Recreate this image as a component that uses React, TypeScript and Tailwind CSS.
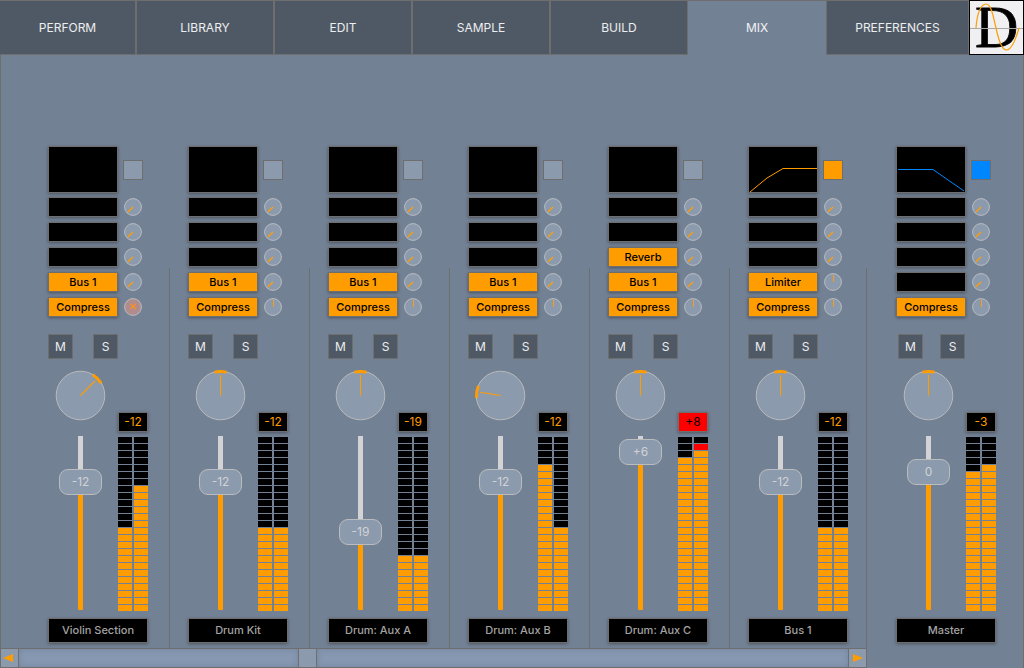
import React from "react";

type Insert = { name?: string; knob?: "low" | "mid" | "off" };

type Channel = {
  name: string;
  filter?: "highpass" | "lowpass";
  inserts: Insert[];
  pan: number;
  peak: string;
  clip?: boolean;
  gain: string;
  faderTop: number;
  meters: [number, number];
};

const SEGMENTS = 25;

const aux = (name: string, rest: Partial<Channel>): Channel => ({
  name,
  inserts: [{}, {}, {}, { name: "Bus 1" }, { name: "Compress", knob: "mid" }],
  pan: 0,
  peak: "-12",
  gain: "-12",
  faderTop: 33,
  meters: [12, 12],
  ...rest,
});

const channels: Channel[] = [
  aux("Violin Section", {
    inserts: [{}, {}, {}, { name: "Bus 1" }, { name: "Compress", knob: "off" }],
    pan: 45,
    meters: [12, 18],
  }),
  aux("Drum Kit", {}),
  aux("Drum: Aux A", { peak: "-19", gain: "-19", faderTop: 83, meters: [8, 8] }),
  aux("Drum: Aux B", { pan: -81, meters: [21, 12] }),
  aux("Drum: Aux C", {
    inserts: [{}, {}, { name: "Reverb" }, { name: "Bus 1" }, { name: "Compress", knob: "mid" }],
    peak: "+8",
    clip: true,
    gain: "+6",
    faderTop: 3,
    meters: [22, 24],
  }),
  aux("Bus 1", {
    filter: "highpass",
    inserts: [{}, {}, {}, { name: "Limiter", knob: "mid" }, { name: "Compress", knob: "mid" }],
  }),
];

const master = aux("Master", {
  filter: "lowpass",
  inserts: [{}, {}, {}, {}, { name: "Compress", knob: "mid" }],
  peak: "-3",
  gain: "0",
  faderTop: 23,
  meters: [20, 21],
});

function Logo() {
  return (
    <svg viewBox="0 0 55 55" className="h-[55px] w-[55px] shrink-0 overflow-visible" role="img" aria-label="D">
      <rect x="0.5" y="0.5" width="54" height="54" fill="#f0f0f2" stroke="#000" />
      <text x="6" y="47" fontSize="60" fontFamily="Liberation Serif, serif" fill="#000" stroke="#000" strokeWidth="0.8">
        D
      </text>
      <path d="M1 28.500H54" stroke="#a8a8a8" strokeWidth="1" />
      <path
        d="M7 28C8 13 12 4 17 4C22 4 24 15 27 28C30 42 33 50 37.500 50C42 50 46 42 50 28"
        fill="none"
        stroke="#ff9d00"
        strokeWidth="1.200"
      />
    </svg>
  );
}

function Header() {
  const tab = "border-y border-[#6e6e6e] text-center text-xs text-white/90";
  const idle = "border-r bg-[#4f5965]";
  return (
    <header className="flex h-[55px] w-full">
      <nav className="grid min-w-0 flex-1 grid-cols-[136fr_138fr_138fr_138fr_138fr_138fr_143fr]">
        <button className={`${tab} ${idle}`}>PERFORM</button>
        <button className={`${tab} ${idle} border-l`}>LIBRARY</button>
        <button className={`${tab} ${idle} border-l`}>EDIT</button>
        <button className={`${tab} ${idle} border-l`}>SAMPLE</button>
        <button className={`${tab} ${idle} border-l`}>BUILD</button>
        <button aria-current="page" className={`${tab} border-b-[#738194] bg-[#738194]`}>
          MIX
        </button>
        <button className={`${tab} ${idle} border-l`}>PREFERENCES</button>
      </nav>
      <Logo />
    </header>
  );
}

function FilterDisplay({ type }: { type?: Channel["filter"] }) {
  return (
    <svg viewBox="0 0 70 47" className="h-[47px] w-[70px] shadow-[0_1px_3px_rgba(0,0,0,0.35)]" aria-hidden="true">
      <rect x="0.5" y="0.5" width="69" height="46" fill="#000" stroke="#6e6e6e" />
      {type === "highpass" && (
        <path d="M2 46L19 32L35 22.500H69" fill="none" stroke="#ff9d00" strokeWidth="1" />
      )}
      {type === "lowpass" && (
        <path d="M2 23.500H37L68 45" fill="none" stroke="#0087ff" strokeWidth="1" />
      )}
    </svg>
  );
}

function SendKnob({ state, label }: { state: "low" | "mid" | "off"; label: string }) {
  return (
    <label className="ml-1.5 block h-[18px] w-[18px]">
      <input type="range" aria-label={label} className="sr-only" />
      <svg viewBox="0 0 18 18" className="h-[18px] w-[18px]" aria-hidden="true">
        <circle cx="9" cy="9" r="8.400" fill={state === "off" ? "#b08c8c" : "#8c9aae"} stroke="#b9bcc0" />
        {state === "low" && <path d="M9 9L3.800 14" stroke="#ff9d00" strokeWidth="1.300" />}
        {state === "mid" && <path d="M9.500 9V2" stroke="#f09d20" strokeWidth="1.100" />}
        {state === "off" && <path d="M6.500 6L11.800 11M11.800 6L6.500 11" stroke="#ff9020" strokeWidth="1.300" />}
      </svg>
    </label>
  );
}

function PanKnob({ angle, label }: { angle: number; label: string }) {
  return (
    <label className="ml-1.5 mt-2.5 block h-[53px] w-[53px]">
      <input type="range" min={-135} max={135} defaultValue={angle} aria-label={label} className="sr-only" />
      <svg viewBox="0 0 53 53" className="h-[53px] w-[53px]" aria-hidden="true">
        <circle cx="26.5" cy="26.5" r="24.300" fill="#8c9aae" stroke="#b9b9bb" />
        <g transform={`rotate(${angle} 26.5 26.5)`} fill="none" stroke="#ff9d00">
          <path d="M26.500 26.500V6" strokeWidth="1.100" />
          <path d="M20.500 3.200A24.100 24.100 0 0 1 32.500 3.200" strokeWidth="3" />
        </g>
      </svg>
    </label>
  );
}

function Fader({ top, gain, label }: { top: number; gain: string; label: string }) {
  return (
    <div className="relative ml-[11px] mt-3.5 flex h-[174px] w-[43px] justify-center">
      <div className="w-[5px] rounded-[1px] bg-[#ff9d00]">
        <div className="bg-[#d3d3d5]" style={{ height: top }} />
      </div>
      <div
        className="absolute inset-x-0 flex h-[26px] items-center justify-center rounded-[9px] border border-[#bbbcbe] bg-[#8c9aae] text-xs text-[#d0d2d5]"
        style={{ top }}
      >
        {gain}
      </div>
      <input
        type="range"
        min={-60}
        max={6}
        defaultValue={Number(gain)}
        aria-label={label}
        className="absolute inset-0 h-full w-full opacity-0 [writing-mode:vertical-lr]"
      />
    </div>
  );
}

function Meter({ level }: { level: number }) {
  return (
    <div className="flex w-3.5 flex-col gap-px">
      {Array.from({ length: SEGMENTS }, (_, i) => {
        const lit = i >= SEGMENTS - level;
        const color = !lit ? "bg-black" : i < 2 ? "bg-[#ff0000]" : "bg-[#ff9d00]";
        return <div key={i} className={`h-1.5 ${color}`} />;
      })}
    </div>
  );
}

function Strip({ channel, isMaster }: { channel: Channel; isMaster?: boolean }) {
  const c = channel;
  const toggle =
    c.filter === "highpass" ? "bg-[#ff9d00]" : c.filter === "lowpass" ? "bg-[#0087ff]" : "bg-[#8c9aae]";
  const small = "h-[25px] w-[25px] border border-[#6e6e6e] bg-[#4f5965] text-xs text-white/90";
  return (
    <section aria-label={c.name} className="w-[100px] shrink-0 pb-[5px]">
      <div className="flex items-center">
        <FilterDisplay type={c.filter} />
        <button aria-label={`${c.name} filter`} className={`ml-[5px] h-5 w-5 border border-[#6e6e6e] ${toggle}`} />
      </div>
      <div className="mt-1 flex flex-col gap-[5px]">
        {c.inserts.map((insert, i) => (
          <div key={i} className="flex items-center">
            <button
              aria-label={insert.name ?? `Empty insert ${i + 1}`}
              className={`h-5 w-[70px] border border-[#6e6e6e] text-[11px] leading-[18px] font-medium text-black shadow-[0_1px_3px_rgba(0,0,0,0.35)] ${
                insert.name ? "bg-[#ff9d00]" : "bg-black"
              }`}
            >
              {insert.name}
            </button>
            <SendKnob state={insert.knob ?? "low"} label={`${c.name} insert ${i + 1} amount`} />
          </div>
        ))}
      </div>
      <div className={`mt-[17px] flex ${isMaster ? "gap-[17px] pl-0.5" : "gap-5"}`}>
        <button className={small}>M</button>
        <button className={small}>S</button>
      </div>
      <div className="flex">
        <div className="w-[70px]">
          <PanKnob angle={c.pan} label={`${c.name} pan`} />
          <Fader top={c.faderTop} gain={c.gain} label={`${c.name} gain`} />
        </div>
        <div className="w-[30px] pt-[53px]">
          <div
            className={`h-5 border border-[#6e6e6e] text-center text-xs leading-[18px] shadow-[0_1px_3px_rgba(0,0,0,0.35)] ${
              c.clip ? "bg-[#ff0000] text-black" : "bg-black text-[#ff9d00]"
            }`}
          >
            {c.peak}
          </div>
          <div className="mt-[5px] flex gap-0.5">
            <Meter level={c.meters[0]} />
            <Meter level={c.meters[1]} />
          </div>
        </div>
      </div>
      <div className="mt-[7px] h-[25px] border border-[#6e6e6e] bg-black text-center text-[11px] leading-[23px] font-medium text-[#a3a3a3] shadow-[0_1px_3px_rgba(0,0,0,0.35)]">
        {c.name}
      </div>
    </section>
  );
}

function ScrollBar() {
  return (
    <div className="flex h-5 border-y border-[#6e6e6e] bg-[#8798b2]">
      <button aria-label="Scroll left" className="flex w-[18px] items-center justify-center border-r border-[#6e6e6e] bg-[#8c9aae]">
        <svg viewBox="0 0 10 8" className="mr-1 h-2 w-2.5">
          <path d="M10 0V8L0 4Z" fill="#ff9d00" />
        </svg>
      </button>
      <div className="flex min-w-0 flex-1">
        <div className="flex-[279_1_0%] shadow-[inset_0_0_6px_rgba(60,70,90,0.25)]" />
        <div className="w-[19px] border-x border-[#6e6e6e] bg-[#8c9aae]" />
        <div className="flex-[531_1_0%] shadow-[inset_0_0_6px_rgba(60,70,90,0.25)]" />
      </div>
      <button aria-label="Scroll right" className="flex w-[19px] items-center justify-center border-x border-[#6e6e6e] bg-[#8c9aae]">
        <svg viewBox="0 0 10 8" className="h-2 w-2.5">
          <path d="M0 0V8L10 4Z" fill="#ff9d00" />
        </svg>
      </button>
    </div>
  );
}

export default function App() {
  return (
    <div className="flex min-h-screen flex-col bg-[#738194] font-['Inter',sans-serif]">
      <Header />
      <main className="flex flex-1 border-x border-[#6e6e6e]">
        <div className="flex min-w-0 flex-1 flex-col">
          <div className="flex flex-1 overflow-hidden pl-[29px]">
            {channels.map((channel, i) => {
              const last = i === channels.length - 1;
              return (
                <div key={channel.name} className={`flex pl-[18px] ${last ? "flex-1" : "w-[140px] shrink-0"}`}>
                  <div className="pt-[91px]">
                    <Strip channel={channel} />
                  </div>
                  <div className="ml-auto h-[380px] w-px self-end bg-[#6e6e6e]" />
                </div>
              );
            })}
          </div>
          <ScrollBar />
        </div>
        <div className="w-[156px] shrink-0 pt-[91px] pl-[29px]">
          <Strip channel={master} isMaster />
        </div>
      </main>
    </div>
  );
}
